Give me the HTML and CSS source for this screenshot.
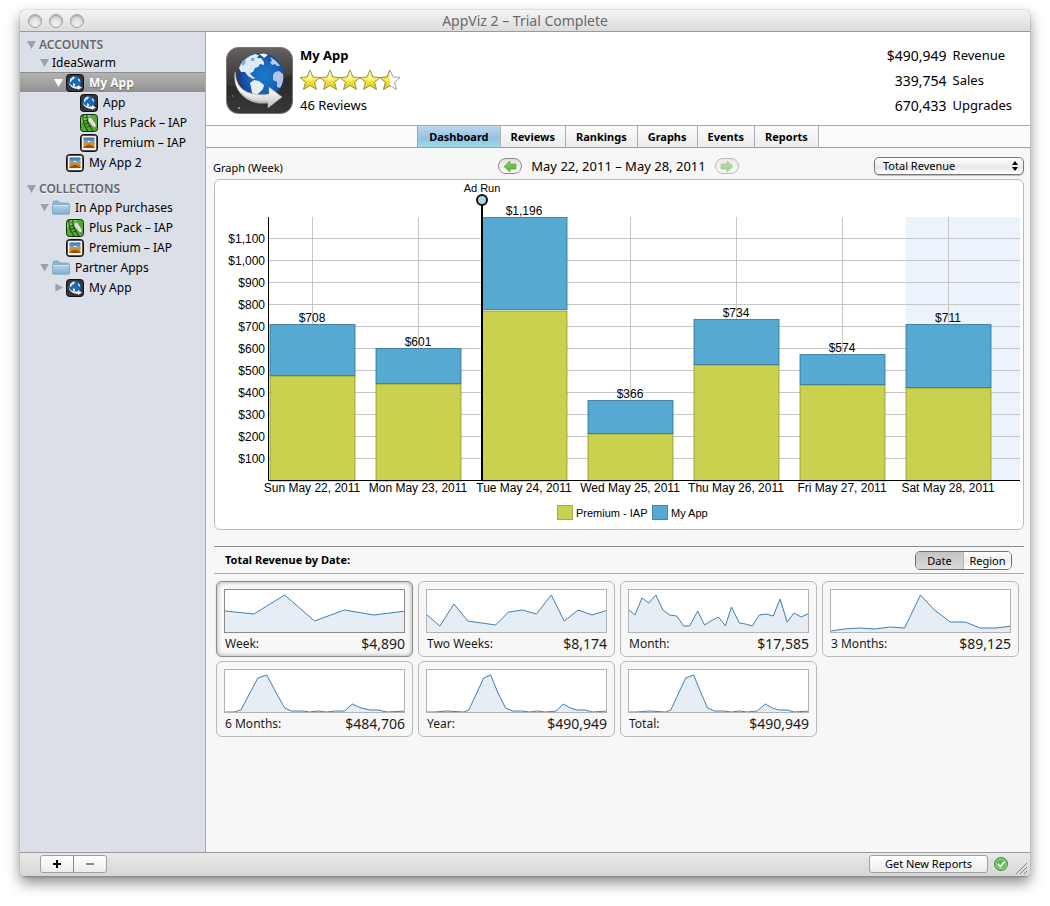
FILE: index.html
```html
<!DOCTYPE html>
<html lang="en">
<head>
<meta charset="utf-8">
<title>AppViz 2 – Trial Complete</title>
<link rel="stylesheet" href="styles.css">
</head>
<body>
<svg class="defs" aria-hidden="true">
  <defs>
    <linearGradient id="g-dark" x1="0" y1="0" x2="0" y2="1"><stop offset="0" stop-color="#5a5654"/><stop offset=".5" stop-color="#2a2829"/><stop offset="1" stop-color="#3a3737"/></linearGradient>
    <radialGradient id="g-globe" cx=".55" cy=".5" r=".6"><stop offset="0" stop-color="#1a7ccc"/><stop offset=".55" stop-color="#1763b6"/><stop offset="1" stop-color="#1a2f86"/></radialGradient>
    <linearGradient id="g-arrow" x1="0" y1="0" x2="0" y2="1"><stop offset="0" stop-color="#ffffff"/><stop offset=".6" stop-color="#f0f0f0"/><stop offset="1" stop-color="#b9b9b9"/></linearGradient>
    <linearGradient id="g-star" x1="0" y1="0" x2="0" y2="1"><stop offset="0" stop-color="#fffbc0"/><stop offset=".5" stop-color="#f6e83c"/><stop offset="1" stop-color="#dcc916"/></linearGradient>
    <linearGradient id="g-folder" x1="0" y1="0" x2="0" y2="1"><stop offset="0" stop-color="#b4d2e8"/><stop offset="1" stop-color="#84aed0"/></linearGradient>
    <linearGradient id="g-sky" x1="0" y1="0" x2="0" y2="1"><stop offset="0" stop-color="#2f6fb4"/><stop offset="1" stop-color="#a5cbe6"/></linearGradient>
    <linearGradient id="g-green" x1="0" y1="0" x2="0" y2="1"><stop offset="0" stop-color="#8ad84e"/><stop offset="1" stop-color="#4fae2c"/></linearGradient>
    <linearGradient id="g-pill" x1="0" y1="0" x2="0" y2="1"><stop offset="0" stop-color="#dedede"/><stop offset="1" stop-color="#ffffff"/></linearGradient>

    <symbol id="i-globe" viewBox="0 0 67 67">
      <rect x=".5" y=".5" width="66" height="66" rx="12" fill="url(#g-dark)" stroke="#777372"/>
      <path d="M1 13Q1 1 13 1H54Q66 1 66 13V27Q36 44 1 38Z" fill="#fff" opacity=".07"/>
      <circle cx="35" cy="29" r="23" fill="url(#g-globe)"/>
      <path d="M13 21Q16 13 24 9L29 7 33 8 31 11 35 11 38 15 38 18 34 17 32 20 29 21 27 25 24 26 26 29 29 31 27 32 22 29 19 25 15 25Z" fill="#dcebf8"/>
      <path d="M16 14L20 13 19 17 16 19ZM25 11L29 11 28 14 25 14Z" fill="#7db0df"/>
      <path d="M33 7L38 6.500 42 8 38 11 36 9Z" fill="#f4f9fd"/>
      <path d="M44 10Q50 13 54 19L51 19 49 17 46 18 44 15 46 14Z" fill="#b9cdea"/>
      <path d="M49 25L53 24 57 27Q58 35 54 41L51 40 51 35 47 33 47 28Z" fill="#b3c2e6"/>
      <path d="M28 33L33 34 38 38 37 42 33 46 30 49 26 46 25 40 24 36Z" fill="#e6eef4"/>
      <path d="M9 25Q10 40 21 45Q31 49 43 47V40L56 50 42 61V56Q25 58 15 47Q7 38 9 25Z" fill="url(#g-arrow)" stroke="#aaa8a8" stroke-width=".5"/>
      <path d="M15 46Q25 57 42 55" fill="none" stroke="#a8a8a8" stroke-width="1"/>
      <circle cx="13" cy="61" r="1" fill="#aaa"/><circle cx="7" cy="49" r=".7" fill="#888"/>
    </symbol>
    <symbol id="i-globe-small" viewBox="0 0 18 18">
      <rect x=".5" y=".5" width="17" height="17" rx="3" fill="#343639" stroke="#111"/>
      <circle cx="9" cy="8" r="6" fill="#1c68b2"/>
      <path d="M4 5L7 2.500 9 3 8 5 6 6 5 8 4 8ZM12 4L14 6 14 8 12 6Z" fill="#d3e5f5"/>
      <path d="M7 9L9 10 9 12 7 12Z" fill="#dbe7ef"/>
      <path d="M2 7Q4 12 9 12.500L12 12.500V11L16 13.500 12 16V15Q4 15 2 7Z" fill="#f0f0f0"/>
    </symbol>
    <symbol id="i-plus" viewBox="0 0 18 18">
      <rect x=".5" y=".5" width="17" height="17" rx="3" fill="#4cae2c" stroke="#172b10"/>
      <path d="M1 4L6 1H11L5 7 1 9Z" fill="#83d75a"/>
      <path d="M3 1Q2 9 8 17M7 1Q6 8 13 17" fill="none" stroke="#17360f" stroke-width="1"/>
      <path d="M4 4L7 3M4 7L8 6M5 10L9 9M7 13L11 12" stroke="#17360f" stroke-width=".8"/>
      <path d="M8 4L11 3 16 10 16 14 13 13 8 7Z" fill="#dedfd9" stroke="#666" stroke-width=".6"/>
    </symbol>
    <symbol id="i-photo" viewBox="0 0 18 18">
      <rect x=".5" y=".5" width="17" height="17" rx="3" fill="#55534f" stroke="#111"/>
      <rect x="2" y="2" width="14" height="14" rx="1" fill="#f7f3e9"/>
      <rect x="3.500" y="3.500" width="11" height="7" fill="url(#g-sky)"/>
      <path d="M3.500 9L8 8 11 9 14.500 8V14H3.500Z" fill="#d98a22"/>
      <path d="M3.500 13L9 10.500 14.500 13V14H3.500Z" fill="#8c5316"/>
      <path d="M8 7H10V8H8Z" fill="#fff"/>
    </symbol>
    <symbol id="i-folder" viewBox="0 0 18 18">
      <path d="M1 15V4Q1 2 2 2H6Q7 2 8 4H16Q17 4 17 5V15Z" fill="#8fb5d2" stroke="#7ea6c4" stroke-width=".8"/>
      <path d="M.5 6H17.500V14Q17.500 15 16.500 15H1.500Q.5 15 .5 14Z" fill="url(#g-folder)" stroke="#7ea6c4" stroke-width=".8"/>
      <path d="M1 6.500H17" stroke="#cfe3f1"/>
    </symbol>
    <symbol id="i-star" viewBox="0 0 20 20">
      <path d="M10 0L13 7 20 7.500 14.500 12.300 16.500 19.500 10 15.500 3.500 19.500 5.500 12.300 0 7.500 7 7Z" fill="url(#g-star)" stroke="#8f8745" stroke-width=".9"/>
      <path d="M10 3L11.800 8.200 17 8.500 10 11 3 8.500 8.200 8.200Z" fill="#fff" opacity=".4"/>
    </symbol>
    <symbol id="i-star-half" viewBox="0 0 20 20">
      <path d="M10 0L13 7 20 7.500 14.500 12.300 16.500 19.500 10 15.500 3.500 19.500 5.500 12.300 0 7.500 7 7Z" fill="#fff" stroke="#999780" stroke-width=".9"/>
      <path d="M10 0V15.500L3.500 19.500 5.500 12.300 0 7.500 7 7Z" fill="url(#g-star)"/>
      <path d="M10 0L7 7 0 7.500 5.500 12.300 3.500 19.500 10 15.500" fill="none" stroke="#8f8745" stroke-width=".9"/>
    </symbol>
    <symbol id="i-arrow" viewBox="0 0 24 16">
      <rect x=".5" y=".5" width="23" height="15" rx="7.500" fill="url(#g-pill)" stroke="#8a8a8a"/>
      <path d="M6 8.500L12 3V6H18V11H12V14Z" fill="url(#g-green)" stroke="#5b9a48" stroke-width=".7"/>
    </symbol>
  </defs>
</svg>

<div class="window">
  <header class="titlebar">
    <div class="lights"><button aria-label="Close"></button><button aria-label="Minimize"></button><button aria-label="Zoom"></button></div>
    <h1>AppViz 2 – Trial Complete</h1>
  </header>

  <div class="body">
    <nav class="sidebar" aria-label="Sources">
      <div class="row head"><button class="tri" aria-label="Toggle accounts"></button><span>ACCOUNTS</span></div>
      <div class="row account l1"><button class="tri" aria-label="Toggle IdeaSwarm"></button><span>IdeaSwarm</span></div>
      <div class="row l2 selected"><button class="tri" aria-label="Toggle My App"></button><svg><use href="#i-globe-small"/></svg><span>My App</span></div>
      <div class="row l3 leaf"><svg><use href="#i-globe-small"/></svg><span>App</span></div>
      <div class="row l3 leaf"><svg><use href="#i-plus"/></svg><span>Plus Pack – IAP</span></div>
      <div class="row l3 leaf"><svg><use href="#i-photo"/></svg><span>Premium – IAP</span></div>
      <div class="row l2 leaf"><svg><use href="#i-photo"/></svg><span>My App 2</span></div>
      <div class="row head second"><button class="tri" aria-label="Toggle collections"></button><span>COLLECTIONS</span></div>
      <div class="row l1"><button class="tri" aria-label="Toggle In App Purchases"></button><svg><use href="#i-folder"/></svg><span>In App Purchases</span></div>
      <div class="row l2 leaf"><svg><use href="#i-plus"/></svg><span>Plus Pack – IAP</span></div>
      <div class="row l2 leaf"><svg><use href="#i-photo"/></svg><span>Premium – IAP</span></div>
      <div class="row l1"><button class="tri" aria-label="Toggle Partner Apps"></button><svg><use href="#i-folder"/></svg><span>Partner Apps</span></div>
      <div class="row l2"><button class="tri closed" aria-label="Toggle My App"></button><svg><use href="#i-globe-small"/></svg><span>My App</span></div>
    </nav>

    <main class="content">
      <section class="app">
        <svg class="app-icon" role="img" aria-label="My App icon"><use href="#i-globe"/></svg>
        <div class="app-info">
          <h2>My App</h2>
          <div class="stars" role="img" aria-label="4.5 stars"><svg><use href="#i-star"/></svg><svg><use href="#i-star"/></svg><svg><use href="#i-star"/></svg><svg><use href="#i-star"/></svg><svg><use href="#i-star-half"/></svg></div>
          <p>46 Reviews</p>
        </div>
        <div class="stats">
          <span class="num">$490,949</span><span>Revenue</span>
          <span class="num">339,754</span><span>Sales</span>
          <span class="num">670,433</span><span>Upgrades</span>
        </div>
      </section>

      <div class="tabs">
        <button class="active">Dashboard</button><button>Reviews</button><button>Rankings</button><button>Graphs</button><button>Events</button><button>Reports</button>
      </div>

      <div class="toolbar">
        <label for="metric">Graph (Week)</label>
        <div class="range">
          <button aria-label="Previous week"><svg><use href="#i-arrow"/></svg></button>
          <span>May 22, 2011 – May 28, 2011</span>
          <button class="next" aria-label="Next week"><svg><use href="#i-arrow"/></svg></button>
        </div>
        <div class="select">
          <select id="metric"><option>Total Revenue</option></select>
          <svg viewBox="0 0 6 10" aria-hidden="true"><path d="M3 0L6 4H0ZM3 10L0 6H6Z"/></svg>
        </div>
      </div>

      <section class="panel">
        <svg class="chart" viewBox="0 0 808 349" role="img" aria-label="Revenue per day">
          <rect class="weekend" x="691" y="37" width="114" height="263"/>
          <path class="grid" d="M54 58.500H805M54 80.500H805M54 102.500H805M54 124.500H805M54 146.500H805M54 168.500H805M54 190.500H805M54 212.500H805M54 234.500H805M54 256.500H805M54 278.500H805M97.500 37V300M203.500 37V300M415.500 37V300M521.500 37V300M627.500 37V300M733.500 37V300"/>
          <g class="iap">
            <rect x="55" y="196" width="85" height="105"/><rect x="161" y="204" width="85" height="97"/><rect x="267" y="131" width="85" height="170"/><rect x="373" y="254" width="85" height="47"/><rect x="479" y="185" width="85" height="116"/><rect x="585" y="205" width="85" height="96"/><rect x="691" y="208" width="85" height="93"/>
          </g>
          <g class="own">
            <rect x="55" y="144.500" width="85" height="51"/><rect x="161" y="168.500" width="85" height="35"/><rect x="267" y="37.500" width="85" height="92"/><rect x="373" y="220.500" width="85" height="33"/><rect x="479" y="139.500" width="85" height="45"/><rect x="585" y="174.500" width="85" height="30"/><rect x="691" y="144.500" width="85" height="63"/>
          </g>
          <path class="axis" d="M53.500 37V300.500H805"/>
          <path class="marker" d="M267 20V300"/><circle class="pin" cx="267" cy="20" r="5"/>
          <text class="note" x="267" y="12">Ad Run</text>
          <g class="yl">
            <text x="50" y="63">$1,100</text><text x="50" y="85">$1,000</text><text x="50" y="107">$900</text><text x="50" y="129">$800</text><text x="50" y="151">$700</text><text x="50" y="173">$600</text><text x="50" y="195">$500</text><text x="50" y="217">$400</text><text x="50" y="239">$300</text><text x="50" y="261">$200</text><text x="50" y="283">$100</text>
          </g>
          <g class="xl">
            <text x="97" y="142">$708</text><text x="203" y="166">$601</text><text x="309" y="35">$1,196</text><text x="415" y="218">$366</text><text x="521" y="137">$734</text><text x="627" y="172">$574</text><text x="733" y="142">$711</text>
            <text x="97" y="312">Sun May 22, 2011</text><text x="203" y="312">Mon May 23, 2011</text><text x="309" y="312">Tue May 24, 2011</text><text x="415" y="312">Wed May 25, 2011</text><text x="521" y="312">Thu May 26, 2011</text><text x="627" y="312">Fri May 27, 2011</text><text x="733" y="312">Sat May 28, 2011</text>
          </g>
          <g class="iap key"><rect x="342.500" y="325.500" width="15" height="14"/><text x="361" y="337">Premium - IAP</text></g>
          <g class="own key"><rect x="437.500" y="325.500" width="15" height="14"/><text x="456" y="337">My App</text></g>
        </svg>
      </section>

      <div class="section-bar">
        <h3>Total Revenue by Date:</h3>
        <div class="segment"><button class="on">Date</button><button>Region</button></div>
      </div>

      <div class="cards">
        <button class="card current">
          <svg viewBox="0 0 180 42" preserveAspectRatio="none"><path d="M-2 44V21L0 21 29 24 60 5 90 31 120 20 150 25 182 21V44Z"/></svg>
          <span>Week:</span><b>$4,890</b>
        </button>
        <button class="card">
          <svg viewBox="0 0 180 42" preserveAspectRatio="none"><path d="M-2 44V23L0 25 13 36 27 14 41 31 69 35 82 22 96 20 110 24 125 5 138 31 152 20 166 25 182 20V44Z"/></svg>
          <span>Two Weeks:</span><b>$8,174</b>
        </button>
        <button class="card">
          <svg viewBox="0 0 180 42" preserveAspectRatio="none"><path d="M-2 44V19L0 20 6 25 13 8 20 13 27 5 34 20 41 25 48 26 55 36 61 36 69 21 76 35 82 31 90 27 97 36 103 17 111 33 117 34 124 36 131 25 138 24 145 26 152 9 159 32 166 23 173 27 182 23V44Z"/></svg>
          <span>Month:</span><b>$17,585</b>
        </button>
        <button class="card">
          <svg viewBox="0 0 180 42" preserveAspectRatio="none"><path d="M-2 44V41L0 41 13 39 29 38 44 39 59 37 74 38 90 5 104 20 120 32 135 32 150 38 166 38 182 36V44Z"/></svg>
          <span>3 Months:</span><b>$89,125</b>
        </button>
        <button class="card">
          <svg viewBox="0 0 180 42" preserveAspectRatio="none"><path d="M-2 44V42H9L16 40 33 8 42 5 51 22 60 38 67 41H78L85 42 93 41 102 42 111 41 120 41 128 34 137 38 146 40H154L163 42 182 41V44Z"/></svg>
          <span>6 Months:</span><b>$484,706</b>
        </button>
        <button class="card">
          <svg viewBox="0 0 180 42" preserveAspectRatio="none"><path d="M-2 44V42H8L20 41 37 42 42 40 57 8 64 5 71 22 79 38 86 41H95L103 42 111 41 119 42 130 41 137 34 144 38 151 40H159L166 42 182 41V44Z"/></svg>
          <span>Year:</span><b>$490,949</b>
        </button>
        <button class="card">
          <svg viewBox="0 0 180 42" preserveAspectRatio="none"><path d="M-2 44V42H8L20 41 37 42 42 40 57 8 65 5 72 22 79 38 86 41H95L103 42 111 41 119 42 129 41 137 34 144 38 151 40H159L166 42 182 41V44Z"/></svg>
          <span>Total:</span><b>$490,949</b>
        </button>
      </div>
    </main>
  </div>

  <footer class="statusbar">
    <div class="pair">
      <button aria-label="Add"><svg viewBox="0 0 8 8"><path d="M0 4H8M4 0V8"/></svg></button><button class="minus" aria-label="Remove"><svg viewBox="0 0 8 8"><path d="M0 4H8"/></svg></button>
    </div>
    <button class="push">Get New Reports</button>
    <svg class="ok" viewBox="0 0 14 14" role="img" aria-label="Up to date"><circle cx="7" cy="7" r="6.500" fill="#5db653" stroke="#3e9a3d"/><circle cx="7" cy="7" r="5" fill="none" stroke="#a3dc97"/><path d="M4 7L6.500 9.500 10.500 4.500" fill="none" stroke="#fff" stroke-width="2"/></svg>
    <svg class="grip" viewBox="0 0 12 12" aria-hidden="true"><path d="M1 12L12 1M5 12L12 5M9 12L12 9"/></svg>
  </footer>
</div>
</body>
</html>
```
FILE: styles.css
```css
* { box-sizing: border-box; }

body {
  margin: 0;
  padding: 10px 20px 29px;
  background: #fff;
  color: #000;
  font: 12px/20px "Noto Sans", "Open Sans", sans-serif;
}

h1, h2, h3, p { margin: 0; font-size: inherit; }

button {
  margin: 0;
  padding: 0;
  border: 0;
  background: none;
  color: inherit;
  font: inherit;
}

.defs { position: absolute; width: 0; height: 0; }

.window {
  display: flex;
  flex-direction: column;
  min-height: calc(100vh - 39px);
  border-radius: 5px;
  overflow: hidden;
  background: #f7f7f7;
  box-shadow: 0 0 1px rgba(0, 0, 0, .6), 0 6px 14px rgba(0, 0, 0, .45);
}

.titlebar {
  display: grid;
  grid-template-columns: 1fr auto 1fr;
  align-items: center;
  height: 22px;
  padding: 0 8px;
  border-bottom: 1px solid #9a9a9a;
  background: linear-gradient(#f4f4f4, #dcdcdc);
}
.titlebar h1 { color: #6a6a6a; font-size: 14px; font-weight: 400; }
.lights { display: flex; gap: 7px; }
.lights button {
  width: 14px;
  height: 14px;
  border: 1px solid #a0a0a0;
  border-radius: 50%;
  background: radial-gradient(circle at 50% 80%, #f4f4f4, #cfcfcf);
  box-shadow: inset 0 1px 2px rgba(0, 0, 0, .25);
}

.body { display: flex; flex: 1; }

.sidebar {
  flex: none;
  width: 186px;
  padding-top: 4px;
  border-right: 1px solid #a8a8a8;
  background: #dbdfe7;
}
.row {
  display: flex;
  align-items: center;
  height: 20px;
  padding-top: 1px;
  padding-left: 7px;
  white-space: nowrap;
}
.row svg { width: 18px; height: 18px; margin-right: 5px; }
.row.head { height: 17px; color: #666; font-weight: 600; text-shadow: 0 1px #f2f4f7; }
.row.second { margin-top: 8px; }
.row.account { height: 19px; }
.row.l1 { padding-left: 20px; }
.row.l2 { padding-left: 34px; }
.row.l3 { padding-left: 48px; }
.row.l2.leaf { padding-left: 46px; }
.row.l3.leaf { padding-left: 60px; }
.row.selected {
  border-top: 1px solid #8f8f8f;
  background: linear-gradient(#b2b2b2, #929292);
  color: #fff;
  font-weight: 700;
  text-shadow: 0 1px 1px #666;
}
.tri {
  width: 9px;
  height: 8px;
  margin-right: 3px;
  background: #9aa2ae;
  clip-path: polygon(0 0, 100% 0, 50% 100%);
}
.tri.closed { clip-path: polygon(15% 0, 100% 50%, 15% 100%); }
.selected .tri { background: #fff; }

.content { flex: 1; min-width: 0; }

.app {
  display: flex;
  align-items: center;
  height: 94px;
  padding: 3px 18px 0 20px;
  border-bottom: 1px solid #a9a9a9;
  background: #fff;
  font-size: 13px;
  line-height: 25px;
}
.app-icon { width: 67px; height: 67px; margin-right: 7px; }
.app-info { flex: 1; }
.app-info h2 { font-weight: 700; }
.stars { display: flex; height: 25px; align-items: center; }
.stars svg { width: 20px; height: 20px; }
.stats { display: grid; grid-template-columns: auto auto; column-gap: 6px; }
.num { font-size: 14px; text-align: right; }

.tabs {
  display: flex;
  justify-content: center;
  height: 22px;
  border-bottom: 1px solid #a0a0a0;
  background: #fafdfc;
}
.tabs button {
  padding: 0 10px;
  border-right: 1px solid #b0b0b0;
  background: linear-gradient(#fbfbfb, #ececec);
  font-size: 11px;
  font-weight: 700;
}
.tabs .active {
  padding: 0 11px;
  border-left: 1px solid #8fa9bd;
  background: linear-gradient(#bcd8ef, #93c0e4 60%, #9bdceb);
}

.toolbar {
  display: grid;
  grid-template-columns: 1fr auto 1fr;
  align-items: center;
  height: 31px;
  padding: 5px 6px 0 7px;
}
.toolbar label { padding-top: 3px; font-size: 11px; }
.range { display: flex; align-items: center; gap: 9px; font-size: 13px; }
.range button, .range svg { display: block; width: 24px; height: 16px; }
.range .next { transform: scaleX(-1); opacity: .55; }
.select { position: relative; justify-self: end; width: 150px; }
.select select {
  display: block;
  width: 100%;
  height: 18px;
  padding: 0 8px;
  border: 1px solid #777;
  border-radius: 5px;
  appearance: none;
  background: linear-gradient(#fff, #eee 50%, #e4e4e4 51%, #fff);
  box-shadow: 0 1px 1px rgba(0, 0, 0, .25);
  color: #000;
  font: 11px/16px "Noto Sans", "Open Sans", sans-serif;
}
.select svg { position: absolute; top: 4px; right: 6px; width: 6px; height: 10px; pointer-events: none; }

.panel {
  margin: 0 6px 16px 8px;
  border: 1px solid #bcbcbc;
  border-radius: 6px;
  background: #fff;
}
.chart {
  display: block;
  width: 100%;
  font: 12px "Liberation Sans", Arial, sans-serif;
}
.weekend { fill: #ecf3fd; }
.grid { fill: none; stroke: #c6c6c6; }
.own rect { fill: #56a9d1; stroke: #2f6f94; stroke-opacity: .8; }
.iap rect { fill: #c9d14f; stroke: #868c28; stroke-opacity: .7; }
.axis { fill: none; stroke: #000; }
.marker { stroke: #000; stroke-width: 2; }
.pin { fill: #a9d5e7; stroke: #111; stroke-width: 2; }
.yl { text-anchor: end; }
.xl, .note { text-anchor: middle; }
.note, .key { font-size: 11px; }

.section-bar {
  display: flex;
  align-items: center;
  justify-content: space-between;
  height: 28px;
  margin: 0 6px 7px 8px;
  padding: 0 12px 0 11px;
  border-top: 1px solid #8d8d8d;
  border-bottom: 1px solid #ababab;
}
.section-bar h3 { font-size: 11px; font-weight: 700; }
.segment {
  display: flex;
  height: 19px;
  border: 1px solid #707070;
  border-radius: 5px;
  overflow: hidden;
  font-size: 11px;
  line-height: 17px;
}
.segment button { width: 47px; background: linear-gradient(#fff, #ededed 50%, #fff); }
.segment .on { width: 48px; border-right: 1px solid #b5b5b5; background: linear-gradient(#c4c4c4, #dadada); }

.cards {
  display: grid;
  grid-template-columns: repeat(4, 1fr);
  gap: 4px 5px;
  padding: 0 11px 20px 10px;
}
.card {
  display: grid;
  grid-template-columns: auto 1fr;
  align-items: center;
  height: 76px;
  padding: 7px 7px 2px;
  border: 1px solid #b9b9b9;
  border-radius: 6px;
  color: #1a1a1a;
  text-align: left;
}
.card svg {
  grid-column: 1 / 3;
  width: 100%;
  height: 44px;
  border: 1px solid #b3b3b3;
  background: #fff;
}
.card path { fill: #e6edf4; stroke: #3c80b6; stroke-width: 1; }
.card span { padding-left: 1px; }
.card b { font-size: 14px; font-weight: 400; text-align: right; }
.card.current { border-color: #8d8d8d; box-shadow: inset 0 0 4px rgba(0, 0, 0, .35), 0 0 1px #999; }
.card.current svg { border-color: #8a8a8a; }

.statusbar {
  display: flex;
  align-items: center;
  height: 25px;
  padding: 0 3px 2px 20px;
  border-top: 1px solid #9a9a9a;
  border-bottom: 1px solid #8c8c8c;
  background: linear-gradient(#e9e9e9, #d6d6d6);
}
.pair { display: flex; margin-right: auto; border: 1px solid #9f9f9f; border-radius: 3px; background: linear-gradient(#fff, #ececec); }
.pair button { display: grid; place-items: center; width: 32px; height: 16px; }
.pair .minus { width: 33px; border-left: 1px solid #888; }
.pair svg { width: 8px; height: 8px; stroke: #000; stroke-width: 2; }
.pair .minus svg { stroke: #888; }
.push {
  width: 119px;
  height: 18px;
  border: 1px solid #9f9f9f;
  border-radius: 3px;
  background: linear-gradient(#fff, #ececec);
  font-size: 11px;
  line-height: 16px;
}
.ok { width: 14px; height: 14px; margin: 0 7px 0 6px; }
.grip { width: 12px; height: 12px; align-self: end; stroke: #858585; }
```
